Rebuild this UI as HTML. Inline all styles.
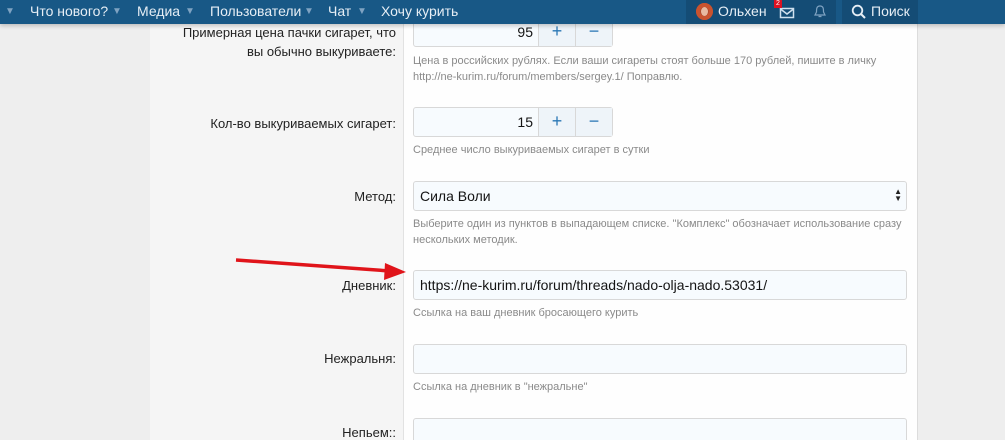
<!DOCTYPE html>
<html><head><meta charset="utf-8"><style>
*{box-sizing:border-box;margin:0;padding:0}
html,body{width:1005px;height:440px;overflow:hidden}
body{background:#eeeeee;font-family:"Liberation Sans","DejaVu Sans",sans-serif;position:relative}
.nav{position:absolute;left:0;top:0;width:1005px;height:24px;background:#185886;color:#e6eef5;font-size:14px;box-shadow:0 2px 4px rgba(0,0,0,.2);z-index:5}
.nav span{position:absolute;top:3px;white-space:nowrap}
.car{font-size:10px;color:#7fa3c2}
.dark{position:absolute;top:0;height:24px;background:#144c75}
.main{position:absolute;left:150px;top:24px;width:768px;height:416px;background:#f5f5f5;border-right:1px solid #dcdcdc}
.right{position:absolute;left:403px;top:24px;width:514px;height:416px;background:#fefefe;border-left:1px solid #e2e2e2}
.lbl{position:absolute;right:609px;font-size:13px;color:#222;text-align:right;line-height:19px}
.inp{position:absolute;left:413px;width:494px;height:30px;background:#f7fbfe;border:1px solid #d8d8d8;border-radius:3px;font-size:14px;color:#141414;padding:6px 6px}
.hint{position:absolute;left:413px;font-size:11px;color:#8a8a8a;line-height:16px}
.num{width:200px;padding:0}
.num .v{position:absolute;right:79px;top:6px}
.num .b{position:absolute;top:0;width:37px;height:28px;border-left:1px solid #d8d8d8;background:#eef4f9;color:#2a77b5;font-size:18px;text-align:center;line-height:27px}
</style></head><body>
<div class="main"></div>
<div class="right"></div>
<div class="nav">
<span class="car" style="left:5px;top:6px">▼</span>
<span style="left:30px">Что нового?</span><span class="car" style="left:112px;top:6px">▼</span>
<span style="left:137px">Медиа</span><span class="car" style="left:185px;top:6px">▼</span>
<span style="left:210px">Пользователи</span><span class="car" style="left:304px;top:6px">▼</span>
<span style="left:328px">Чат</span><span class="car" style="left:357px;top:6px">▼</span>
<span style="left:381px">Хочу курить</span>
<div class="dark" style="left:686px;width:150px"></div>
<div class="dark" style="left:842px;width:76px"></div>
<div style="position:absolute;left:696px;top:3px;width:17px;height:17px;border-radius:50%;background:#b04a2e;box-shadow:inset 0 0 0 4px #c9532f"><div style="margin:4px auto;width:7px;height:9px;border-radius:50%;background:#e8b9a0"></div></div>
<span style="left:718px">Ольхен</span>
<svg style="position:absolute;left:779px;top:5px" width="16" height="14"><rect x="1.5" y="3.5" width="13" height="9" fill="none" stroke="#cfe0ee" stroke-width="1.5"/><path d="M1.5 4 L8 9 L14.5 4" fill="none" stroke="#cfe0ee" stroke-width="1.5"/></svg>
<div style="position:absolute;left:774px;top:0;width:8px;height:8px;background:#d12;color:#fff;font-size:7px;line-height:8px;text-align:center">2</div>
<svg style="position:absolute;left:813px;top:4px" width="14" height="15"><path d="M7 2 C3.5 2 3.5 5 3.5 8 L2 11 L12 11 L10.5 8 C10.5 5 10.5 2 7 2Z M5.5 12.5 L8.5 12.5" fill="none" stroke="#7fa3c2" stroke-width="1.2"/></svg>
<svg style="position:absolute;left:851px;top:4px" width="16" height="16"><circle cx="6.5" cy="6.5" r="4.8" fill="none" stroke="#e6eef5" stroke-width="1.8"/><path d="M10 10 L14 14" stroke="#e6eef5" stroke-width="2"/></svg>
<span style="left:871px">Поиск</span>
</div>

<div class="lbl" style="top:23px">Примерная цена пачки сигарет, что<br>вы обычно выкуриваете:</div>
<div class="inp num" style="top:17px;height:30px"><span class="v">95</span><div class="b" style="right:37px">+</div><div class="b" style="right:0">−</div></div>
<div class="hint" style="top:53px">Цена в российских рублях. Если ваши сигареты стоят больше 170 рублей, пишите в личку<br>http://ne-kurim.ru/forum/members/sergey.1/ Поправлю.</div>

<div class="lbl" style="top:114px">Кол-во выкуриваемых сигарет:</div>
<div class="inp num" style="top:107px"><span class="v">15</span><div class="b" style="right:37px">+</div><div class="b" style="right:0">−</div></div>
<div class="hint" style="top:142px">Среднее число выкуриваемых сигарет в сутки</div>

<div class="lbl" style="top:187px">Метод:</div>
<div class="inp" style="top:181px">Сила Воли<span style="position:absolute;right:4px;top:6px;font-size:8px;line-height:7px;color:#222">▲<br>▼</span></div>
<div class="hint" style="top:216px">Выберите один из пунктов в выпадающем списке. "Комплекс" обозначает использование сразу<br>нескольких методик.</div>

<svg style="position:absolute;left:230px;top:255px" width="180" height="30"><path d="M6 5 L160 16" stroke="#e0141a" stroke-width="3.5"/><path d="M176 17 L155 8 L154 25 Z" fill="#e0141a"/></svg>
<div class="lbl" style="top:276px">Дневник:</div>
<div class="inp" style="top:270px">https://ne-kurim.ru/forum/threads/nado-olja-nado.53031/</div>
<div class="hint" style="top:305px">Ссылка на ваш дневник бросающего курить</div>

<div class="lbl" style="top:349px">Нежральня:</div>
<div class="inp" style="top:344px"></div>
<div class="hint" style="top:379px">Ссылка на дневник в "нежральне"</div>

<div class="lbl" style="top:423px">Непьем::</div>
<div class="inp" style="top:418px"></div>
</body></html>
